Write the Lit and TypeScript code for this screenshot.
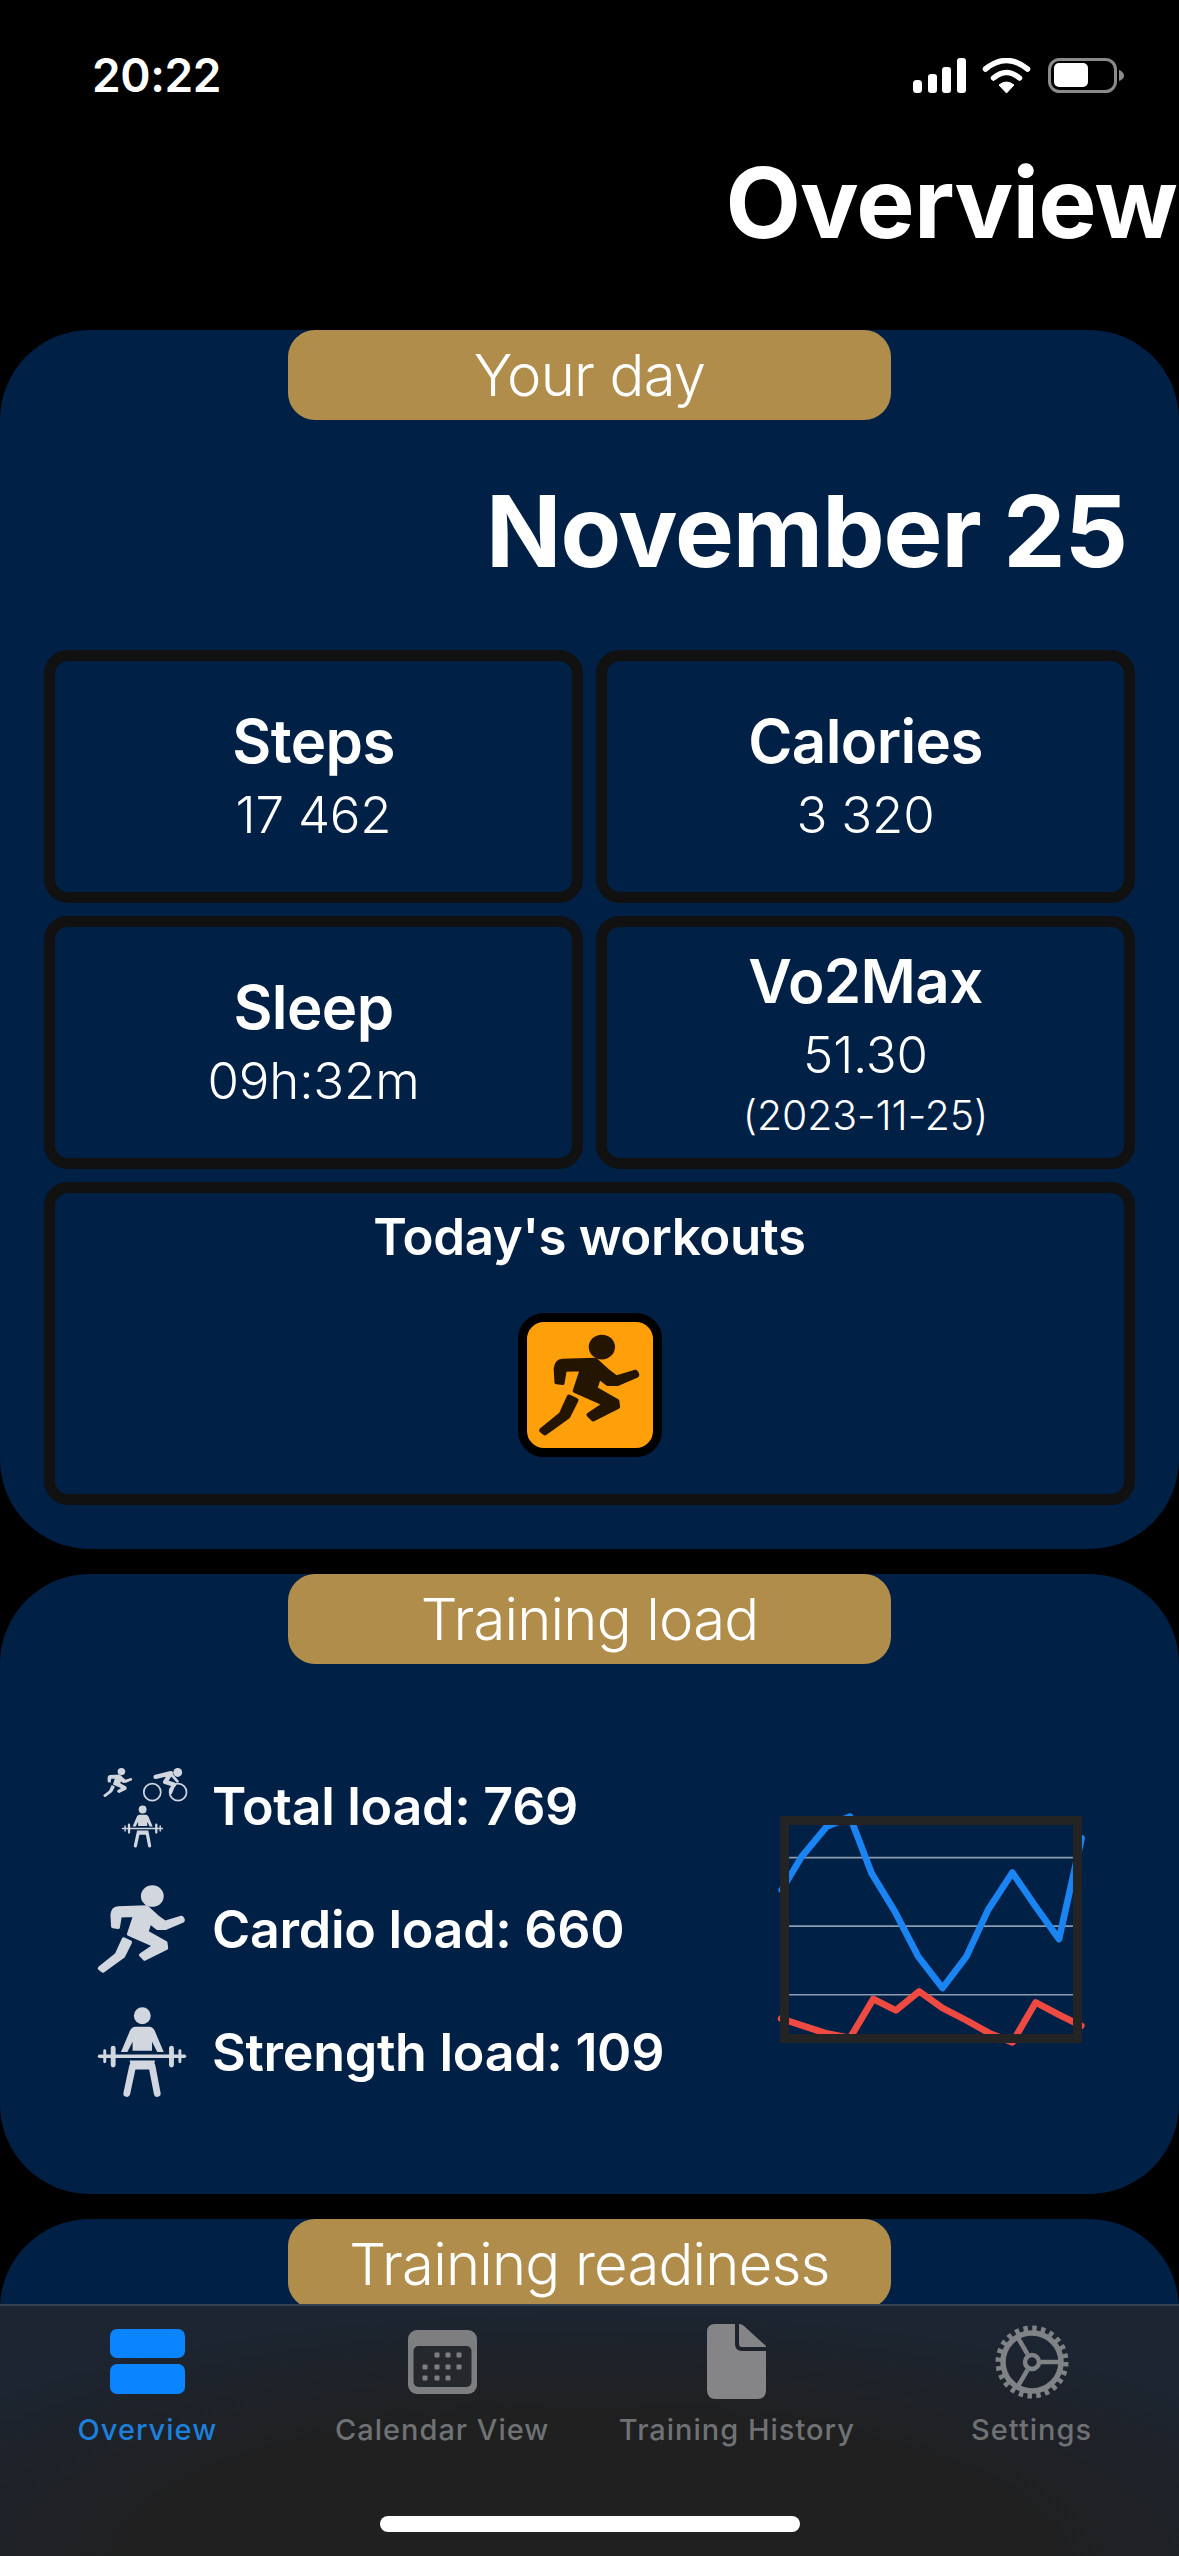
import { LitElement, html, css, svg } from "lit";
import { customElement } from "lit/decorators.js";

const runner = (cls: string) => html`<svg class=${cls} viewBox="105 485 285 290" aria-hidden="true">
  <ellipse cx="280" cy="526" rx="36" ry="34" fill="currentColor"></ellipse>
  <g fill="currentColor" stroke="currentColor" stroke-width="12" stroke-linejoin="round">
    <path d="M156 622 L154 585 Q156 565 172 564 L262 561 L298 594 L320 610 L372 594 Q378 600 376 604 L322 627 L296 627 L272 608 L262 640 L322 674 L324 690 L256 724 L244 712 L288 682 L206 646 L226 586 L178 588 L172 624 Z"></path>
    <path d="M190 662 L210 672 L188 716 L124 762 L114 754 L168 710 Z"></path>
  </g>
</svg>`;

const lifter = (cls: string) => html`<svg class=${cls} viewBox="105 858 280 284" aria-hidden="true">
  <circle cx="246" cy="888" r="26" fill="currentColor"></circle>
  <path d="M224 922 H268 Q278 922 284 934 L312 1000 H292 L276 968 V996 H216 V968 L200 1000 H180 L208 934 Q214 922 224 922 Z" fill="currentColor"></path>
  <g stroke="currentColor" fill="none" stroke-linecap="round">
    <path d="M114 1013 H376" stroke-width="11"></path>
    <path d="M156 988 V1040 M336 988 V1040" stroke-width="15"></path>
    <path d="M130 996 V1030 M362 996 V1030" stroke-width="9"></path>
    <path d="M216 1044 L198 1128 M276 1044 L292 1128" stroke-width="21"></path>
  </g>
  <path d="M207 1026 H285 L280 1054 L246 1054 L212 1054 Z" fill="currentColor"></path>
</svg>`;

const cyclist = (cls: string) => html`<svg class=${cls} viewBox="0 0 135 112" aria-hidden="true">
  <circle cx="105" cy="22" r="13" fill="currentColor"></circle>
  <g fill="none" stroke="currentColor" stroke-linecap="round" stroke-linejoin="round">
    <circle cx="30" cy="80" r="25" stroke-width="5"></circle>
    <circle cx="106" cy="80" r="25" stroke-width="5"></circle>
    <path d="M40 35 L85 24 L68 50 L94 58" stroke-width="13"></path>
    <path d="M86 28 L104 48" stroke-width="8"></path>
    <path d="M94 58 L84 82" stroke-width="9"></path>
  </g>
</svg>`;

const blue = "125,330 185,230 260,140 330,110 395,280 465,395 535,530 608,625 680,530 745,390 818,278 888,380 958,478 1026,175";
const red = "123,717 255,760 330,775 400,658 468,692 538,635 608,685 680,722 748,760 818,788 888,668 958,705 1025,738";

@customElement("app-root")
export class AppRoot extends LitElement {
  static styles = css`
    :host { display: block; font-family: Inter, "Liberation Sans", sans-serif; color: #fff; }
    .screen { position: relative; width: 1179px; height: 2556px; background: #000; overflow: hidden; }
    .status { height: 150px; display: flex; justify-content: space-between; align-items: center; padding: 0 55px 0 92px; box-sizing: border-box; }
    .time { font-size: 46px; font-weight: 600; letter-spacing: -0.4px; }
    .status-icons { display: flex; }
    .status-icons svg { display: block; }
    .title { margin: 0 0 74px; height: 106px; line-height: 106px; text-align: right; padding-right: 2px; font-size: 98px; font-weight: 700; letter-spacing: -0.8px; white-space: nowrap; }
    .card { background: #002046; border-radius: 90px; margin-bottom: 25px; display: flex; flex-direction: column; }
    .pill { align-self: center; box-sizing: border-box; width: 603px; height: 90px; line-height: 90px; text-align: center; background: #b08d4b; border-radius: 27px; font-size: 58px; font-weight: 300; letter-spacing: -0.8px; white-space: nowrap; }
    .date { margin: 58px 0 66px; padding-right: 52px; height: 106px; line-height: 106px; text-align: right; font-size: 99px; font-weight: 700; letter-spacing: -1px; }
    .grid { display: grid; grid-template-columns: 539px 539px; grid-template-rows: 253px 253px 323px; gap: 13px; padding: 0 44px 44px; }
    .box { box-sizing: border-box; border: 11px solid #111; border-radius: 24px; display: flex; flex-direction: column; align-items: center; justify-content: center; }
    .wide { grid-column: 1 / 3; justify-content: flex-start; padding-top: 11px; }
    .name { font-size: 60px; line-height: 68px; font-weight: 600; letter-spacing: -0.6px; }
    .value { font-size: 51px; line-height: 62px; margin-top: 9px; font-weight: 300; letter-spacing: -0.2px; }
    .sub { font-size: 41px; line-height: 46px; margin-top: 6px; font-weight: 300; letter-spacing: -0.1px; }
    .workouts { font-size: 51px; line-height: 66px; font-weight: 600; letter-spacing: -0.35px; }
    .badge { box-sizing: border-box; width: 144px; height: 144px; margin-top: 43px; background: #ff9f0a; border: 9px solid #000; border-radius: 26px; color: #241500; display: flex; align-items: center; justify-content: center; }
    .badge-run { width: 104px; height: 106px; display: block; }
    .load { height: 530px; display: flex; align-items: center; justify-content: space-between; padding: 0 97px 0 96px; box-sizing: border-box; }
    .rows { display: flex; flex-direction: column; }
    .row { height: 123px; display: flex; align-items: center; gap: 24px; font-size: 52px; font-weight: 600; letter-spacing: -0.3px; white-space: nowrap; }
    .ico { width: 92px; height: 92px; color: #d2d7df; display: block; flex: none; }
    .trio { width: 92px; height: 86px; flex: none; color: #d2d7df; display: flex; flex-wrap: wrap; justify-content: center; }
    .trio-run { width: 30px; height: 39px; margin: 0 9px 0 7px; display: block; }
    .trio-cycle { width: 46px; height: 38px; display: block; margin-top: 2px; }
    .trio-lift { width: 43px; height: 43px; display: block; margin-top: 0; }
    .chart { width: 302px; height: 227px; display: block; overflow: visible; flex: none; }
    .tabbar { position: absolute; left: 0; right: 0; bottom: 0; height: 252px; box-sizing: border-box; border-top: 2px solid #33404f; display: grid; grid-template-columns: repeat(4, 1fr); background: radial-gradient(ellipse 68% 100% at 50% 100%, #202020 55%, #1e2229 80%, #1c2531 100%); }
    .tab { display: flex; flex-direction: column; align-items: center; padding-top: 18px; color: #6f7275; }
    .tab.on { color: #1c7fdc; }
    .slot { height: 75px; display: flex; align-items: center; justify-content: center; }
    .slot svg { display: block; }
    .label { margin-top: 13px; font-size: 29px; line-height: 36px; font-weight: 500; letter-spacing: 1px; white-space: nowrap; }
    .home { position: absolute; left: 380px; bottom: 24px; width: 420px; height: 16px; border-radius: 8px; background: #fff; }
  `;

  private gear() {
    const a = [-120, 0, 120].map((d) => (d * Math.PI) / 180);
    return html`<svg width="76" height="76" viewBox="0 0 76 76" fill="none" stroke="#808386">
      <circle cx="38" cy="38" r="29" stroke-width="5.500"></circle>
      <circle cx="38" cy="38" r="33.500" stroke-width="6" stroke-dasharray="4.400 4.370"></circle>
      ${a.map((r) => svg`<line x1=${38 + 9 * Math.cos(r)} y1=${38 + 9 * Math.sin(r)} x2=${38 + 28 * Math.cos(r)} y2=${38 + 28 * Math.sin(r)} stroke-width="4.500"></line>`)}
      <circle cx="38" cy="38" r="7" stroke-width="4.500"></circle>
    </svg>`;
  }

  private calendar() {
    const dots: [number, number][] = [
      [29, 25], [40, 25], [51, 25],
      [17, 37], [29, 37], [40, 37], [51, 37],
      [17, 48], [29, 48], [40, 48],
    ];
    return html`<svg width="69" height="64" viewBox="0 0 69 64">
      <rect width="69" height="64" rx="9" fill="#7e7e80"></rect>
      <rect x="5.500" y="16" width="58" height="41" rx="5" fill="#25282c"></rect>
      ${dots.map(([x, y]) => svg`<rect x=${x - 2.5} y=${y - 2.5} width="5" height="5" rx="1" fill="#7e7e80"></rect>`)}
    </svg>`;
  }

  render() {
    return html`<div class="screen">
      <div class="status">
        <span class="time">20:22</span>
        <div class="status-icons">
          <svg width="211" height="35" viewBox="0 0 211 35" fill="#fff">
            <rect x="0" y="22" width="9" height="13" rx="3.500"></rect>
            <rect x="15" y="16" width="9" height="19" rx="3"></rect>
            <rect x="29" y="9" width="9" height="26" rx="3"></rect>
            <rect x="44" y="0" width="9" height="35" rx="3"></rect>
            <g transform="translate(70 0)">
              <path d="M2.500 11 Q23.500 -6 44.500 11 M10.500 20 Q23.500 9 36.500 20" fill="none" stroke="#fff" stroke-width="5.500" stroke-linecap="round"></path>
              <path d="M16 27 Q23.500 21 31 27 L23.500 35 Z" stroke="#fff" stroke-width="1" stroke-linejoin="round"></path>
            </g>
            <rect x="136.500" y="1.500" width="66" height="32" rx="10" fill="none" stroke="#8a8a8a" stroke-width="3"></rect>
            <rect x="141" y="5" width="34" height="24" rx="5"></rect>
            <path d="M206 12 Q211 14 211 17.500 Q211 21 206 23 Z" fill="#8a8a8a"></path>
          </svg>
        </div>
      </div>
      <h1 class="title">Overview</h1>

      <section class="card">
        <div class="pill">Your day</div>
        <div class="date">November 25</div>
        <div class="grid">
          <div class="box"><div class="name">Steps</div><div class="value">17 462</div></div>
          <div class="box"><div class="name">Calories</div><div class="value">3 320</div></div>
          <div class="box"><div class="name">Sleep</div><div class="value">09h:32m</div></div>
          <div class="box"><div class="name">Vo2Max</div><div class="value">51.30</div><div class="sub">(2023-11-25)</div></div>
          <div class="box wide">
            <div class="workouts">Today's workouts</div>
            <div class="badge">${runner("badge-run")}</div>
          </div>
        </div>
      </section>

      <section class="card">
        <div class="pill">Training load</div>
        <div class="load">
          <div class="rows">
            <div class="row">
              <div class="trio">${runner("trio-run")}${cyclist("trio-cycle")}${lifter("trio-lift")}</div>
              <span>Total load: 769</span>
            </div>
            <div class="row">${runner("ico")}<span>Cardio load: 660</span></div>
            <div class="row">${lifter("ico")}<span>Strength load: 109</span></div>
          </div>
          <svg class="chart" viewBox="120 108 907 682" fill="none" aria-hidden="true">
            <path d="M147 233 H1000 M147 439 H1000 M147 645 H1000" stroke="#8d9bb0" stroke-width="5"></path>
            <polyline points=${blue} stroke="#1a84f2" stroke-width="20" stroke-linejoin="round" stroke-linecap="round"></polyline>
            <polyline points=${red} stroke="#ef4a42" stroke-width="20" stroke-linejoin="round" stroke-linecap="round"></polyline>
            <rect x="133.500" y="121.500" width="880" height="655" stroke="#242424" stroke-width="27"></rect>
          </svg>
        </div>
      </section>

      <section class="card">
        <div class="pill">Training readiness</div>
        <div class="load"></div>
      </section>

      <nav class="tabbar">
        <div class="tab on">
          <div class="slot">
            <svg width="75" height="65" viewBox="0 0 75 65" fill="#0a84ff">
              <rect width="75" height="29" rx="7"></rect>
              <rect y="35" width="75" height="30" rx="7"></rect>
            </svg>
          </div>
          <span class="label">Overview</span>
        </div>
        <div class="tab">
          <div class="slot">${this.calendar()}</div>
          <span class="label">Calendar View</span>
        </div>
        <div class="tab">
          <div class="slot">
            <svg width="59" height="75" viewBox="0 0 59 75" fill="#858587">
              <path d="M8 0 H28 V20 Q28 27 35 27 H59 V66 Q59 75 50 75 H9 Q0 75 0 66 V8 Q0 0 8 0 Z"></path>
              <path d="M32 0 Q35 0 37 2 L59 22 V23 H35 Q32 23 32 20 Z"></path>
            </svg>
          </div>
          <span class="label">Training History</span>
        </div>
        <div class="tab">
          <div class="slot">${this.gear()}</div>
          <span class="label">Settings</span>
        </div>
        <div class="home"></div>
      </nav>
    </div>`;
  }
}
